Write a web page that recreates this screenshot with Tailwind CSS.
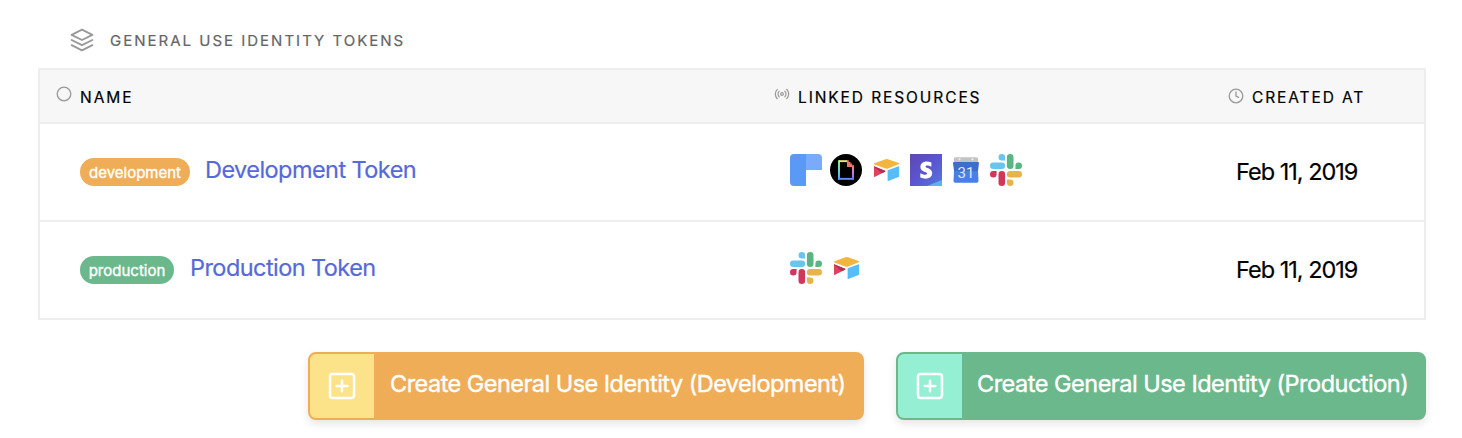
<!DOCTYPE html>
<html lang="en">
<head>
<meta charset="utf-8">
<title>Identity Tokens</title>
<script src="https://cdn.jsdelivr.net/npm/@tailwindcss/browser@4"></script>
</head>
<body class="bg-white text-black font-[Inter,sans-serif] overflow-hidden [-webkit-text-stroke:0.2px]">
<svg class="hidden">
  <defs>
    <symbol id="slack" viewBox="0 0 32 32">
      <path fill="#69c5ed" d="M11.8 0a3.3 3.3 0 0 1 3.3 3.3v3.3h-3.3a3.3 3.3 0 0 1 0-6.6zM3.3 8.4h8.5a3.3 3.3 0 0 1 0 6.6H3.3a3.3 3.3 0 0 1 0-6.6z"/>
      <path fill="#59b582" d="M20.2 0a3.3 3.3 0 0 1 3.3 3.3v8.5a3.3 3.3 0 0 1-6.6 0V3.3A3.3 3.3 0 0 1 20.2 0zM28.7 8.4a3.3 3.3 0 0 1 0 6.6h-3.3v-3.3a3.3 3.3 0 0 1 3.3-3.3z"/>
      <path fill="#e6b44a" d="M20.2 17h8.5a3.3 3.3 0 0 1 0 6.6h-8.5a3.3 3.3 0 0 1 0-6.6zM16.9 25.4h3.3a3.3 3.3 0 1 1-3.3 3.3z"/>
      <path fill="#cf375d" d="M3.3 17h3.3v3.3A3.3 3.3 0 1 1 3.3 17zM11.8 17a3.3 3.3 0 0 1 3.3 3.3v8.4a3.3 3.3 0 0 1-6.6 0v-8.4a3.3 3.3 0 0 1 3.3-3.3z"/>
    </symbol>
    <symbol id="airtable" viewBox="0 0 32 32">
      <path fill="#f2b63f" d="M4.3 9.3 15.6 5.2q1.200-.4 2.400 0L28.800 9.100q.900.500 0 1.100L18 14.500q-1.200.500-2.400 0L4.300 10.400q-.800-.500 0-1.100z"/>
      <path fill="#56bdf8" d="M17.6 16.3 28.6 12.200q.6-.1.6.5v9.500q0 .6-.6.9l-10.400 3.900q-.6.2-.6-.5z"/>
      <path fill="#e2405f" d="M4 12.3 15 16.700q.8.500 0 1L5 22.800q-1 .4-1-.5z"/>
      <path fill="#b52f4e" d="M4 12.300 15 16.700q.8.500 0 1l-3.200 1.600L4 12.800z"/>
    </symbol>
    <symbol id="plus" viewBox="0 0 24 24">
      <g fill="none" stroke="currentColor" stroke-width="1.9" stroke-linecap="round" stroke-linejoin="round"><rect x="3" y="3" width="18" height="18" rx="2"/><path d="M12 8v8M8 12h8"/></g>
    </symbol>
  </defs>
</svg>
<main class="w-[1462px] h-[438px] pl-[38px] pr-9 flex flex-col">
  <header class="h-[68px] pt-3 pl-8 flex items-center gap-4 shrink-0 text-[#666]">
    <svg class="size-6 text-[#999]" viewBox="0 0 24 24" fill="none" stroke="currentColor" stroke-width="1.9" stroke-linejoin="round" stroke-linecap="round"><path d="M12 1.6 1.6 6.8 12 12l10.4-5.2zM1.6 17.2 12 22.4l10.4-5.2M1.6 12 12 17.2 22.4 12"/></svg>
    <h2 class="text-[15px] tracking-[2px] pt-0.5">GENERAL USE IDENTITY TOKENS</h2>
  </header>
  <section class="h-[252px] shrink-0 border-2 border-[#eee] flex flex-col">
    <div class="h-[54px] bg-[#f7f7f7] border-b-2 border-[#eee] flex items-start pt-4 text-[15.5px] leading-6">
      <div class="w-[734px] pl-4 flex gap-2"><svg class="size-4" viewBox="0 0 16 16" fill="none" stroke="#999" stroke-width="1.3"><circle cx="8" cy="8" r="6.8"/></svg><span class="tracking-[2px]">NAME</span></div>
      <div class="w-[454px] flex gap-2"><svg class="size-4" viewBox="0 0 24 24" fill="none" stroke="#999" stroke-width="1.8" stroke-linecap="round"><circle cx="12" cy="12" r="2"/><path d="M16.2 7.8a6 6 0 0 1 0 8.5M7.8 16.2a6 6 0 0 1 0-8.5M19.1 4.9a10 10 0 0 1 0 14.1M4.9 19.1a10 10 0 0 1 0-14.1"/></svg><span class="tracking-[1.9px]">LINKED RESOURCES</span></div>
      <div class="flex gap-2"><svg class="size-4 mt-0.5" viewBox="0 0 16 16" fill="none" stroke="#999" stroke-width="1.3" stroke-linecap="round"><circle cx="8" cy="8" r="6.8"/><path d="M8 4v4l2.6 1.3"/></svg><span class="tracking-[1.9px]">CREATED AT</span></div>
    </div>
    <div class="h-[98px] border-b-2 border-[#eee] flex items-center">
      <div class="w-[750px] pl-10 flex items-center gap-[15px]">
        <span class="w-[110px] h-7 pt-0.5 rounded-full bg-[#f0ad58] text-white text-[15px] flex items-center justify-center [-webkit-text-stroke:0.35px]">development</span>
        <a class="text-[23.5px] tracking-[-0.56px] text-[#5669d8] pb-1">Development Token</a>
      </div>
      <div class="w-[446px] pb-1 flex gap-2">
        <svg class="size-8" viewBox="0 0 32 32"><path fill="#5b99f7" d="M4 0h12v32H4a4 4 0 0 1-4-4V4a4 4 0 0 1 4-4z"/><path fill="#7caafa" d="M16 0h12a4 4 0 0 1 4 4v12H16z"/><path fill="#fcfdff" d="M16 16h16v12a4 4 0 0 1-4 4H16z"/></svg>
        <svg class="size-8" viewBox="0 0 32 32">
          <defs><linearGradient id="gl" x1="0" y1="0" x2="0" y2="1"><stop offset="0" stop-color="#a4e87a"/><stop offset=".5" stop-color="#5fdcc8"/><stop offset="1" stop-color="#5a9cf8"/></linearGradient><linearGradient id="gr" x1="0" y1="0" x2="0" y2="1"><stop offset="0" stop-color="#f08088"/><stop offset=".5" stop-color="#c878ec"/><stop offset="1" stop-color="#7a68f8"/></linearGradient></defs>
          <circle cx="16" cy="16" r="16"/>
          <path fill="url(#gl)" d="M8 6.200h2v19.600H8z"/><path fill="#eeea80" d="M9 6.200h8.400v1.900H9z"/><path fill="#6290f8" d="M8 23.900h16v1.900H8z"/><path fill="url(#gr)" d="M22 12h2v13h-2z"/>
          <path fill="#ec7468" d="M17 6.200h1.800v1.700h1.700v1.700h1.700v1.700H24v1.600h-7z"/>
        </svg>
        <svg class="size-8"><use href="#airtable"/></svg>
        <svg class="size-8" viewBox="0 0 32 32">
          <defs><linearGradient id="st" x1="0" y1="0" x2="1" y2="1"><stop offset="0" stop-color="#6048b0"/><stop offset=".5" stop-color="#5a55d0"/><stop offset="1" stop-color="#5578e0"/></linearGradient></defs>
          <path fill="url(#st)" d="M0 0h32v32H0z"/><path fill="#5bb4f0" d="M32 26v6H17z"/>
          <path fill="#fff" d="M21.400 8.400v4.300c-1.600-.8-3.200-1.200-4.300-1.200-.9 0-1.500.3-1.500.9 0 2.100 6.600 1.200 6.600 6.700 0 3.600-2.700 5.600-6.700 5.600-1.700 0-3.500-.3-5.200-1.100v-4.400c1.600.9 3.600 1.500 5.100 1.500 1 0 1.700-.3 1.700-1.100 0-2.200-6.700-1.400-6.700-6.600 0-3.400 2.600-5.500 6.300-5.500 1.600 0 3.200.3 4.700.9z"/>
        </svg>
        <svg class="size-8" viewBox="0 0 32 32">
          <path fill="#c3c3c3" d="M5.500 3.200h21q1.600 0 1.600 1.600V9H3.900V4.800q0-1.600 1.600-1.600z"/><circle cx="9.600" cy="5.300" r="1.100" fill="#eee"/><circle cx="22.400" cy="5.300" r="1.100" fill="#eee"/>
          <path fill="#3f6dcb" d="M4 8h24q1 0 1 1l-1 8H4L3 9q0-1 1-1z"/><path fill="#4a80e4" d="M4 17h24l.5 10q0 1.700-1.600 1.700H5.100q-1.600 0-1.600-1.700z"/>
          <text x="15.900" y="24" text-anchor="middle" font-family="Roboto" font-size="15" fill="#dfe7f8" stroke="none">31</text>
        </svg>
        <svg class="size-8"><use href="#slack"/></svg>
      </div>
      <span class="text-[23.5px] tracking-[-1px]">Feb 11, 2019</span>
    </div>
    <div class="h-24 flex items-center">
      <div class="w-[750px] pl-10 flex items-center gap-4">
        <span class="w-[94px] h-7 pt-0.5 rounded-full bg-[#6cb88d] text-white text-[15px] flex items-center justify-center [-webkit-text-stroke:0.35px]">production</span>
        <a class="text-[23.5px] tracking-[-0.56px] text-[#5669d8] pb-1">Production Token</a>
      </div>
      <div class="w-[446px] pb-1 flex gap-2">
        <svg class="size-8"><use href="#slack"/></svg>
        <svg class="size-8"><use href="#airtable"/></svg>
      </div>
      <span class="text-[23.5px] tracking-[-1px]">Feb 11, 2019</span>
    </div>
  </section>
  <div class="mt-8 flex justify-end gap-8 text-white text-[23.5px] whitespace-nowrap [-webkit-text-stroke:0.4px]">
    <button class="w-[556px] h-[68px] flex rounded-lg border-2 border-[#f0ad58] bg-[#f0ad58] overflow-hidden shadow-[0_4px_8px_rgba(0,0,0,0.1)]">
      <span class="w-16 h-full bg-[#fce38a] flex items-center justify-center"><svg class="size-8"><use href="#plus"/></svg></span>
      <span class="h-full pl-4 pb-1 flex items-center tracking-[-0.53px]">Create General Use Identity (Development)</span>
    </button>
    <button class="w-[530px] h-[68px] flex rounded-lg border-2 border-[#6cb88d] bg-[#6cb88d] overflow-hidden shadow-[0_4px_8px_rgba(0,0,0,0.1)]">
      <span class="w-16 h-full bg-[#95efd3] flex items-center justify-center"><svg class="size-8"><use href="#plus"/></svg></span>
      <span class="h-full pl-[15px] pb-1 flex items-center tracking-[-0.5px]">Create General Use Identity (Production)</span>
    </button>
  </div>
</main>
</body>
</html>
